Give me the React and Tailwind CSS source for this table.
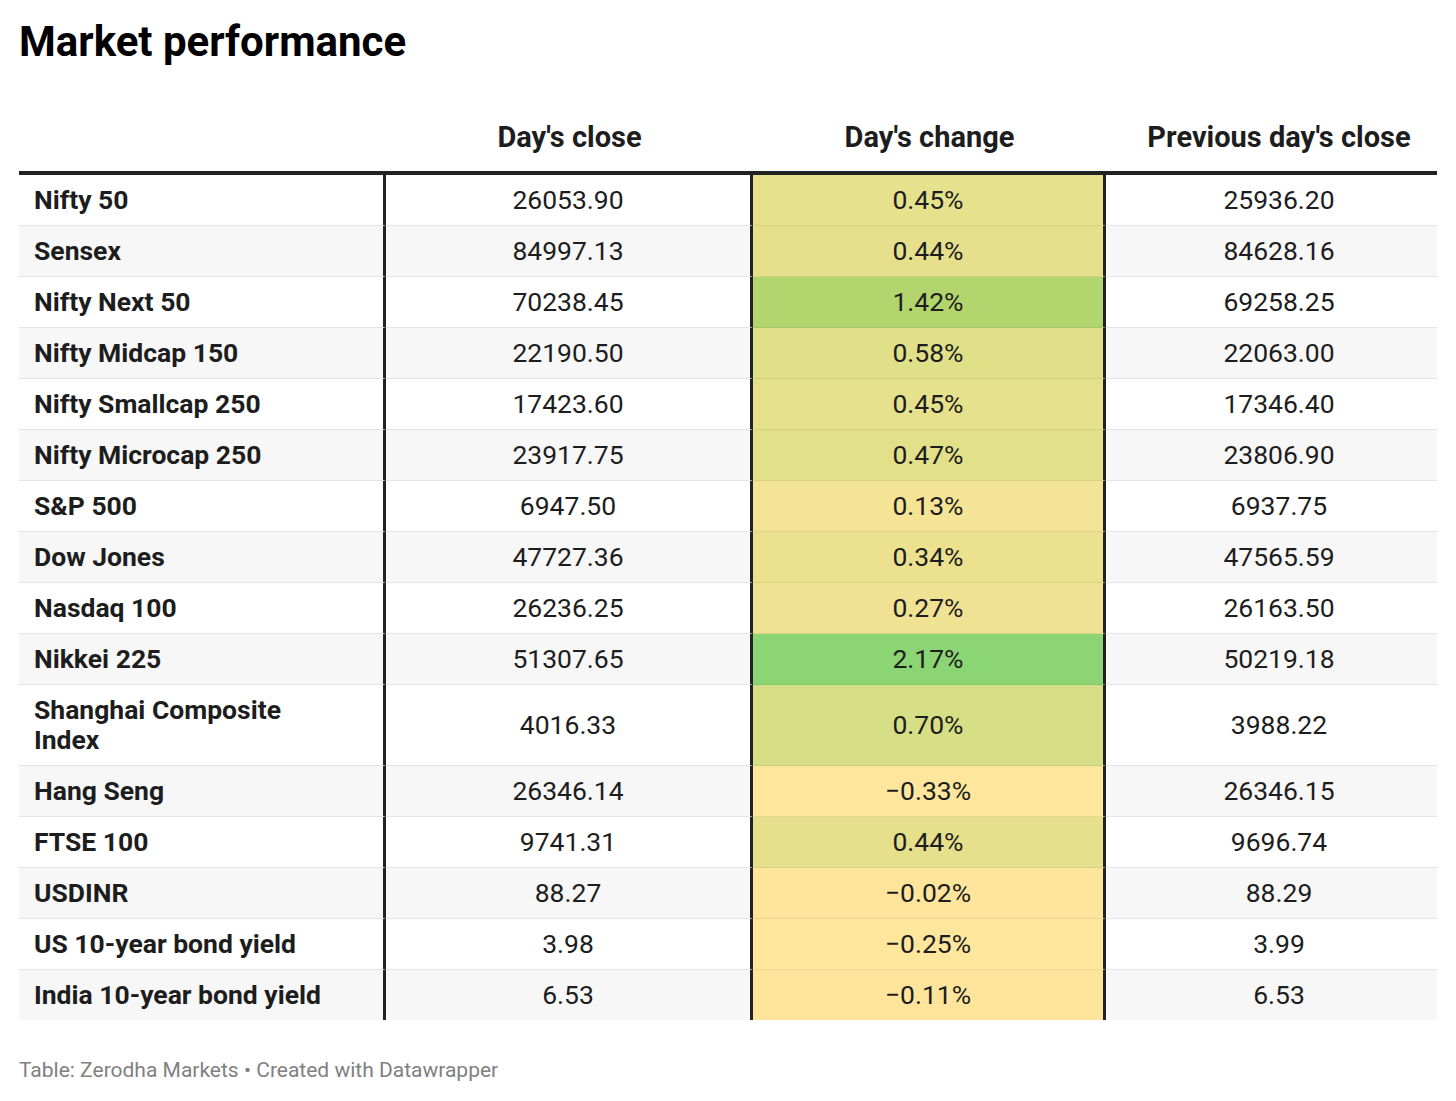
const rows = [
  { name: 'Nifty 50', close: '26053.90', change: '0.45%', color: 'bg-[#e6e18c]', prev: '25936.20' },
  { name: 'Sensex', close: '84997.13', change: '0.44%', color: 'bg-[#e6e08c]', prev: '84628.16' },
  { name: 'Nifty Next 50', close: '70238.45', change: '1.42%', color: 'bg-[#b2d56d]', prev: '69258.25' },
  { name: 'Nifty Midcap 150', close: '22190.50', change: '0.58%', color: 'bg-[#dfe088]', prev: '22063.00' },
  { name: 'Nifty Smallcap 250', close: '17423.60', change: '0.45%', color: 'bg-[#e6e18c]', prev: '17346.40' },
  { name: 'Nifty Microcap 250', close: '23917.75', change: '0.47%', color: 'bg-[#e3e08a]', prev: '23806.90' },
  { name: 'S&P 500', close: '6947.50', change: '0.13%', color: 'bg-[#f5e496]', prev: '6937.75' },
  { name: 'Dow Jones', close: '47727.36', change: '0.34%', color: 'bg-[#ebe18f]', prev: '47565.59' },
  { name: 'Nasdaq 100', close: '26236.25', change: '0.27%', color: 'bg-[#efe293]', prev: '26163.50' },
  { name: 'Nikkei 225', close: '51307.65', change: '2.17%', color: 'bg-[#8bd574]', prev: '50219.18' },
  { name: 'Shanghai Composite Index', close: '4016.33', change: '0.70%', color: 'bg-[#d6df85]', prev: '3988.22' },
  { name: 'Hang Seng', close: '26346.14', change: '\u22120.33%', color: 'bg-[#fee79d]', prev: '26346.15' },
  { name: 'FTSE 100', close: '9741.31', change: '0.44%', color: 'bg-[#e6e08c]', prev: '9696.74' },
  { name: 'USDINR', close: '88.27', change: '\u22120.02%', color: 'bg-[#fee59b]', prev: '88.29' },
  { name: 'US 10-year bond yield', close: '3.98', change: '\u22120.25%', color: 'bg-[#fee69d]', prev: '3.99' },
  { name: 'India 10-year bond yield', close: '6.53', change: '\u22120.11%', color: 'bg-[#fee59b]', prev: '6.53' },
];

const App = () => {
  return (
    <div
      className="w-[1456px] min-h-[1101px] bg-white px-[19px] pt-[17px] text-[#1d1d1d]"
      style={{ fontFamily: 'Roboto, "Liberation Sans", sans-serif' }}
    >
      <h1 className="text-[42px] leading-[50px] font-bold text-black">Market performance</h1>

      {/* Header */}
      <div className="mt-[54px] flex w-[1418px] border-b-4 border-[#222] pb-[18px] text-[29px] leading-[32px] font-bold">
        <div className="w-[367px]" />
        <div className="w-[367px] text-center">Day's close</div>
        <div className="w-[353px] text-center">Day's change</div>
        <div className="w-[331px] pl-[15px] text-center">Previous day's close</div>
      </div>

      {/* Rows */}
      <div className="w-[1418px]">
        {rows.map((row, i) => (
          <div
            key={row.name}
            className={`flex text-[26.5px] leading-[30px] ${i % 2 === 1 ? 'bg-[#f7f7f7]' : 'bg-white'}`}
          >
            <div
              className={`flex w-[367px] items-center border-r-[3px] border-r-[#222] pl-[15px] pr-[60px] py-[10px] font-bold ${
                i < rows.length - 1 ? 'border-b border-b-[#e4e4e4]' : ''
              }`}
            >
              {row.name}
            </div>
            <div
              className={`flex w-[367px] items-center justify-center border-r-[3px] border-r-[#222] py-[10px] ${
                i < rows.length - 1 ? 'border-b border-b-[#e4e4e4]' : ''
              }`}
            >
              {row.close}
            </div>
            <div
              className={`flex w-[353px] items-center justify-center border-r-[3px] border-r-[#222] py-[10px] ${row.color} ${
                i < rows.length - 1 ? 'border-b border-b-black/[0.07]' : ''
              }`}
            >
              {row.change}
            </div>
            <div
              className={`flex w-[331px] items-center justify-center pl-[15px] py-[10px] ${
                i < rows.length - 1 ? 'border-b border-b-[#e4e4e4]' : ''
              }`}
            >
              {row.prev}
            </div>
          </div>
        ))}
      </div>

      <div className="mt-[38px] text-[21px] leading-[24px] text-[#808080]">
        Table: Zerodha Markets • Created with Datawrapper
      </div>
    </div>
  );
};

export default App;
